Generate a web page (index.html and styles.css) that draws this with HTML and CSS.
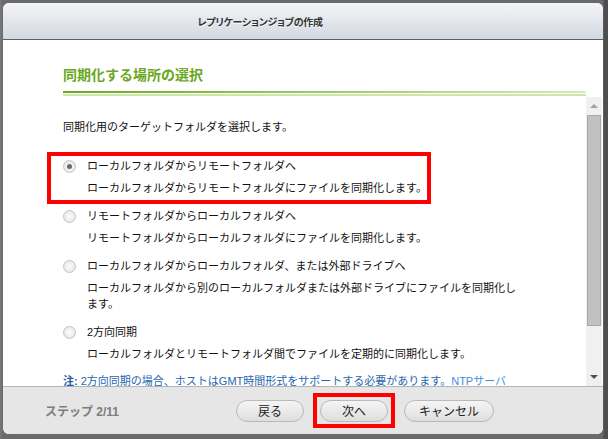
FILE: index.html
```html
<!DOCTYPE html>
<html lang="ja">

<head>
    <meta charset="UTF-8">
    <title>レプリケーションジョブの作成</title>
    <link rel="stylesheet" href="styles.css">
</head>

<body>
    <div class="dialog">
        <div class="dialog-header">
            <span class="dialog-title">レプリケーションジョブの作成</span>
        </div>

        <div class="section-head">
            <h2>同期化する場所の選択</h2>
            <div class="head-rule"></div>
        </div>

        <div class="scroll-area">
            <div class="content">
                <p class="intro">同期化用のターゲットフォルダを選択します。</p>

                <div class="option selected">
                    <span class="mark"></span>
                    <label class="opt-label"><span class="radio checked"></span>ローカルフォルダからリモートフォルダへ</label>
                    <p class="opt-desc">ローカルフォルダからリモートフォルダにファイルを同期化します。</p>
                </div>

                <div class="option">
                    <label class="opt-label"><span class="radio"></span>リモートフォルダからローカルフォルダへ</label>
                    <p class="opt-desc">リモートフォルダからローカルフォルダにファイルを同期化します。</p>
                </div>

                <div class="option">
                    <label class="opt-label"><span class="radio"></span>ローカルフォルダからローカルフォルダ、または外部ドライブへ</label>
                    <p class="opt-desc">ローカルフォルダから別のローカルフォルダまたは外部ドライブにファイルを同期化します。</p>
                </div>

                <div class="option">
                    <label class="opt-label"><span class="radio"></span>2方向同期</label>
                    <p class="opt-desc">ローカルフォルダとリモートフォルダ間でファイルを定期的に同期化します。</p>
                </div>

                <p class="note"><b>注:</b> 2方向同期の場合、ホストはGMT時間形式をサポートする必要があります。<a href="#">NTPサーバ</a></p>
            </div>

            <div class="scrollbar">
                <span class="arrow up"></span>
                <div class="track">
                    <div class="thumb"></div>
                </div>
                <span class="arrow down"></span>
            </div>
        </div>

        <div class="dialog-footer">
            <span class="step">ステップ 2/11</span>
            <div class="buttons">
                <button class="button">戻る</button>
                <button class="button next">次へ<span class="mark"></span></button>
                <button class="button">キャンセル</button>
            </div>
        </div>
    </div>
</body>

</html>
```

FILE: styles.css
```css
body,
html {
    margin: 0;
    padding: 0;
}

body {
    width: 608px;
    height: 439px;
    background: linear-gradient(to right, #7a7a7a 0, #6a6a6a 3px, #6a6a6a 603px, #4e4e4e 604px);
    font-family: "Liberation Sans", "Noto Sans CJK JP", sans-serif;
    font-size: 11px;
    color: #111;
    overflow: hidden;
}

.dialog {
    position: relative;
    top: 3px;
    left: 3px;
    width: 600px;
    height: 431px;
    background: #fff;
    border-radius: 6px;
    overflow: hidden;
    display: flex;
    flex-direction: column;
}

.dialog-header {
    height: 36px;
    flex: none;
    border-bottom: 1px solid #59606a;
    background: linear-gradient(#f3f4f6, #d3d9e1);
    display: flex;
    align-items: center;
    justify-content: center;
    padding-right: 86px;
}

.dialog-title {
    font-weight: bold;
    font-size: 10px;
    letter-spacing: -0.3px;
    color: #333;
    font-feature-settings: "palt";
    text-shadow: 0 1px 0 #fff;
}

.section-head {
    flex: none;
    padding: 26px 17px 0 60px;
    height: 31px;
}

.section-head h2 {
    margin: 0;
    font-size: 14px;
    line-height: 18px;
    color: #6aa81c;
    font-weight: bold;
}

.head-rule {
    margin-top: 7px;
    height: 2px;
    border-bottom: 1px solid #fff;
    background: linear-gradient(to right, #6aa81c, #d6eab6);
    box-shadow: 0 2px 0 #cfe5ae;
}

.scroll-area {
    flex: 1;
    display: flex;
    min-height: 0;
}

.content {
    flex: 1;
    overflow: hidden;
    padding: 22px 0 0 60px;
    line-height: 16px;
}

.intro {
    margin: 0 0 23px;
}

.option {
    position: relative;
    margin-bottom: 12px;
}

.opt-label {
    display: flex;
    align-items: center;
}

.radio {
    width: 11px;
    height: 11px;
    border-radius: 50%;
    border: 1px solid #c4c4c4;
    background: radial-gradient(#fdfdfd, #e0e0e0);
    margin: 0 11px 0 0;
    flex: none;
    box-sizing: content-box;
    position: relative;
}

.radio.checked::after {
    content: "";
    position: absolute;
    left: 3px;
    top: 3px;
    width: 5px;
    height: 5px;
    border-radius: 50%;
    background: #6a6a6a;
}

.opt-desc {
    margin: 6px 0 0 24px;
    width: 432px;
}

.mark {
    position: absolute;
    border: 4px solid #ff0000;
    pointer-events: none;
}

.option .mark {
    left: -16px;
    top: -6px;
    width: 376px;
    height: 44px;
}

.note {
    margin: 8px 0 0;
    line-height: 15px;
    color: #2466ad;
}

.note b {
    color: #1d5da3;
}

.note a {
    color: #3b8fe0;
}

.scrollbar {
    width: 16px;
    margin-right: 1px;
    flex: none;
    background: #f0f0f0;
    display: flex;
    flex-direction: column;
    align-items: center;
}

.arrow {
    width: 0;
    height: 0;
    border-left: 4px solid transparent;
    border-right: 4px solid transparent;
    margin: 7px 0;
}

.arrow.up {
    border-bottom: 4px solid #a3a3a3;
}

.arrow.down {
    border-top: 4px solid #505050;
}

.track {
    flex: 1;
    width: 100%;
    padding: 0 1px;
    box-sizing: border-box;
}

.thumb {
    height: 209px;
    background: #c1c1c1;
    border: 1px solid #a8a8a8;
}

.dialog-footer {
    flex: none;
    height: 47px;
    border-top: 1px solid #b4b4b4;
    background: #e6e6e6;
    display: flex;
    align-items: center;
    padding: 0 0 0 42px;
}

.step {
    color: #7c7c7c;
    font-weight: bold;
    font-size: 12px;
    width: 191px;
}

.buttons {
    display: flex;
    gap: 16px;
}

.button {
    position: relative;
    height: 22px;
    min-width: 68px;
    padding: 0 14px;
    border: 1px solid #b9b9b9;
    border-radius: 11px;
    background: linear-gradient(#f5f5f5, #dedede);
    font-family: "Liberation Sans", "Noto Sans CJK JP", sans-serif;
    font-size: 12px;
    color: #222;
}

.button.next .mark {
    left: -8px;
    top: -8px;
    width: 74px;
    height: 27px;
}
```
